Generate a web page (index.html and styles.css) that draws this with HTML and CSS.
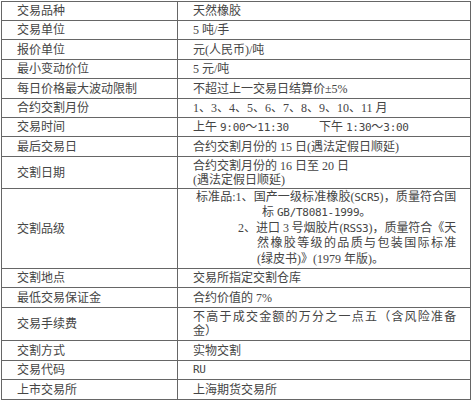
FILE: index.html
```html
<!DOCTYPE html>
<html lang="zh-CN">
<head>
<meta charset="utf-8">
<title>天然橡胶期货合约</title>
<link rel="stylesheet" href="styles.css">
</head>
<body>
<div class="sheet">
  <div class="c k">交易品种</div><div class="c v">天然橡胶</div>
  <div class="c k">交易单位</div><div class="c v">5 吨/手</div>
  <div class="c k">报价单位</div><div class="c v">元(人民币)/吨</div>
  <div class="c k">最小变动价位</div><div class="c v">5 元/吨</div>
  <div class="c k">每日价格最大波动限制</div><div class="c v">不超过上一交易日结算价±5%</div>
  <div class="c k">合约交割月份</div><div class="c v">1、3、4、5、6、7、8、9、10、11 月</div>
  <div class="c k">交易时间</div><div class="c v"><span class="am">上午 <span class="m">9:00</span>～<span class="m">11:30</span></span><span>下午 <span class="m">1:30</span>～<span class="m">3:00</span></span></div>
  <div class="c k">最后交易日</div><div class="c v">合约交割月份的 15 日(遇法定假日顺延)</div>
  <div class="c k">交割日期</div>
  <div class="c v stack">
    <div class="ln">合约交割月份的 16 日至 20 日</div>
    <div class="ln">(遇法定假日顺延)</div>
  </div>
  <div class="c k">交割品级</div>
  <div class="c v stack grade">
    <div class="ln just i1">标准品:1、国产一级标准橡胶(<span class="m">SCR5</span>)，质量符合国</div>
    <div class="ln i2">标 <span class="m">GB/T8081-1999</span>。</div>
    <div class="ln just i3">2、进口 3 号烟胶片(<span class="m">RSS3</span>)，质量符合《天</div>
    <div class="ln just i4">然橡胶等级的品质与包装国际标准</div>
    <div class="ln i4">(绿皮书)》(1979 年版)。</div>
  </div>
  <div class="c k">交割地点</div><div class="c v">交易所指定交割仓库</div>
  <div class="c k">最低交易保证金</div><div class="c v">合约价值的 7%</div>
  <div class="c k">交易手续费</div>
  <div class="c v stack">
    <div class="ln just">不高于成交金额的万分之一点五（含风险准备</div>
    <div class="ln">金）</div>
  </div>
  <div class="c k">交割方式</div><div class="c v">实物交割</div>
  <div class="c k">交易代码</div><div class="c v"><span class="m">RU</span></div>
  <div class="c k">上市交易所</div><div class="c v">上海期货交易所</div>
</div>
</body>
</html>
```

FILE: styles.css
```css
html, body {
  background: #ffffff;
}
body {
  margin: 1px 0 0 1px;
  overflow: hidden;
  font-family: "Liberation Serif", "Noto Sans CJK SC", serif;
  font-size: 12px;
  color: #454545;
}
.sheet {
  display: grid;
  width: max-content;
  grid-template-columns: 175px 292px;
  grid-template-rows: 18px 18px 19px 18px 19px 18px 18px 19px 31px 79px 18px 19px 32px 19px 18px 19px;
  gap: 1px;
  padding: 1px;
  background: #666666;
}
.c {
  background: #ffffff;
  display: flex;
  align-items: center;
  padding: 0 14px 0 15px;
  line-height: 14px;
  white-space: nowrap;
}
.stack {
  flex-direction: column;
  justify-content: center;
  align-items: stretch;
}
.grade .ln {
  line-height: 15.5px;
}
.just {
  text-align: justify;
  text-align-last: justify;
  white-space: normal;
  letter-spacing: -0.3px;
}
.m {
  font-family: "DejaVu Sans Mono", monospace;
  font-size: 11px;
  letter-spacing: -0.3px;
}
.i1 { padding-left: 3px; }
.i2 { padding-left: 69px; }
.i3 { padding-left: 45px; }
.i4 { padding-left: 64px; }
.am {
  display: inline-block;
  width: 126px;
}
```
